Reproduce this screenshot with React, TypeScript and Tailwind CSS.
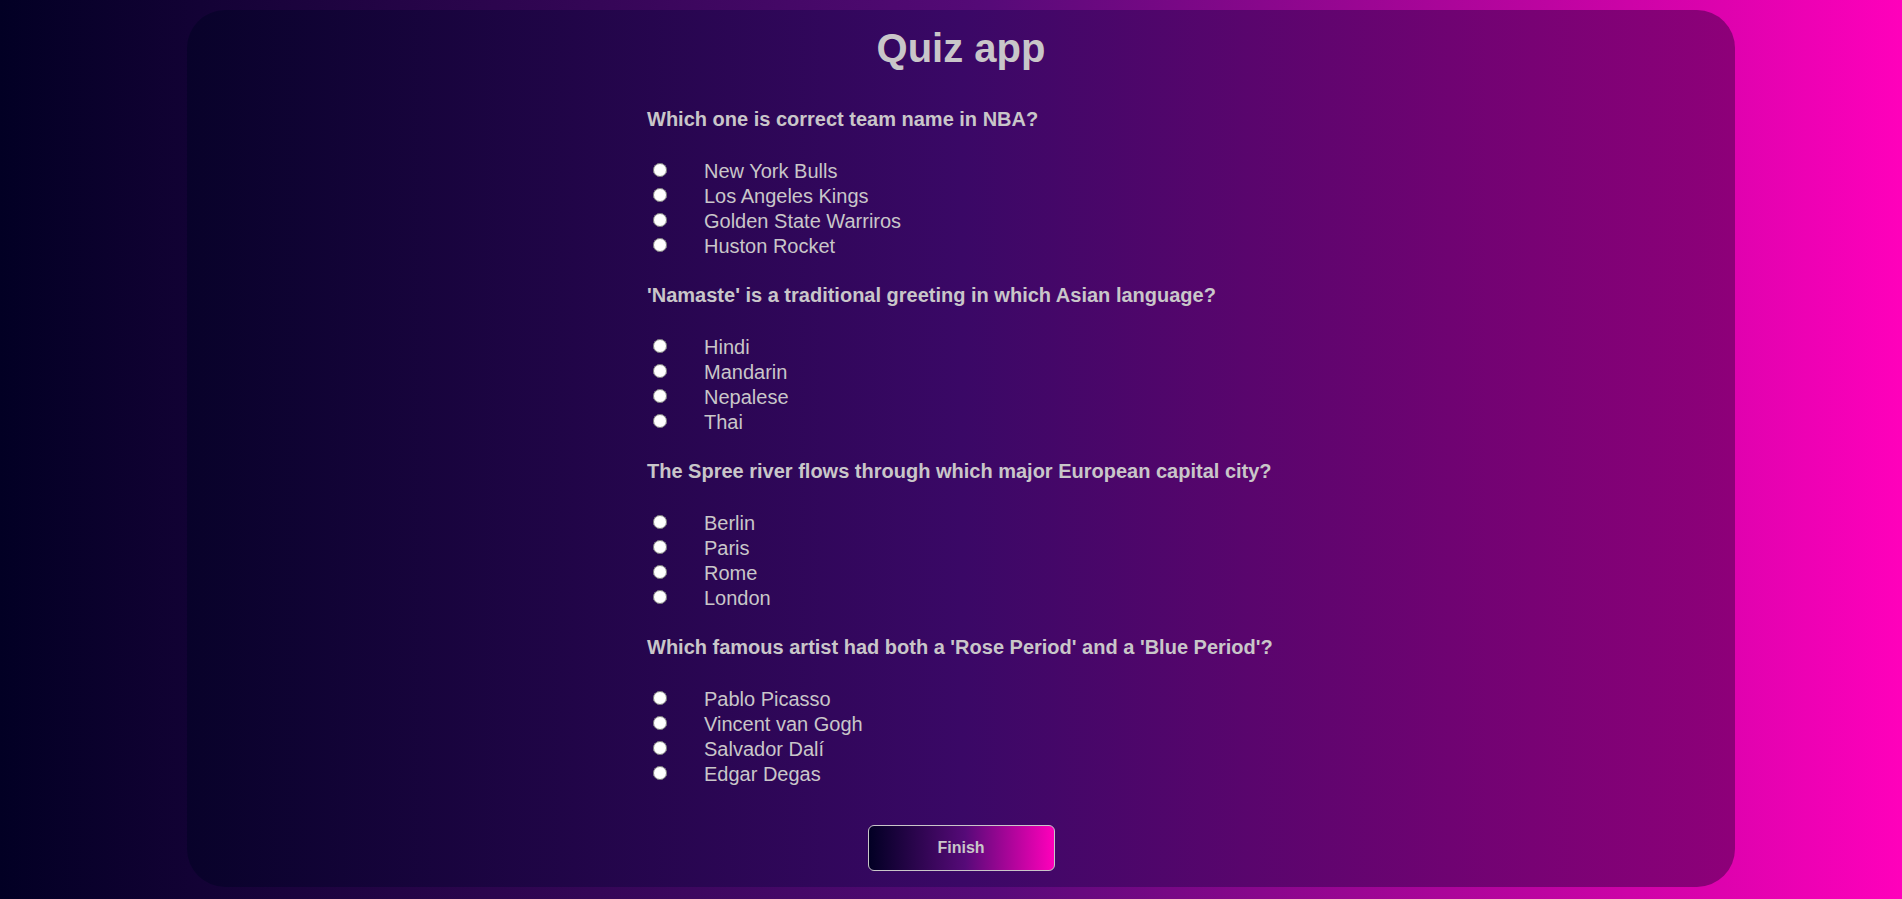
import React, { useState } from 'react';

interface Question {
  id: number;
  text: string;
  options: string[];
}

const questions: Question[] = [
  {
    id: 1,
    text: 'Which one is correct team name in NBA?',
    options: ['New York Bulls', 'Los Angeles Kings', 'Golden State Warriros', 'Huston Rocket'],
  },
  {
    id: 2,
    text: "'Namaste' is a traditional greeting in which Asian language?",
    options: ['Hindi', 'Mandarin', 'Nepalese', 'Thai'],
  },
  {
    id: 3,
    text: 'The Spree river flows through which major European capital city?',
    options: ['Berlin', 'Paris', 'Rome', 'London'],
  },
  {
    id: 4,
    text: "Which famous artist had both a 'Rose Period' and a 'Blue Period'?",
    options: ['Pablo Picasso', 'Vincent van Gogh', 'Salvador Dalí', 'Edgar Degas'],
  },
];

const App: React.FC = () => {
  const [answers, setAnswers] = useState<Record<number, string>>({});

  return (
    <div
      className="min-h-screen bg-[linear-gradient(to_right,#020024,#560a78_52%,#ff00bb)] pl-[187px] pr-[167px] pt-[10px] pb-[12px] text-[#c9c6c9]"
      style={{ fontFamily: '"Liberation Sans", Arial, sans-serif' }}
    >
      <div className="h-[877px] rounded-[38px] bg-[linear-gradient(to_right,#08022a,#3a0866_50%,#8e0079)] pt-[15px] pb-[16px] flex flex-col">
        <h1 className="text-center text-[40px] leading-[46px] font-bold">Quiz app</h1>

        <div className="w-[628px] mx-auto mt-[37px]">
          {questions.map((q) => (
            <div key={q.id} className="mb-[25px]">
              <p className="text-[20px] leading-[23px] font-bold">{q.text}</p>
              <div className="mt-[28px]">
                {q.options.map((opt) => (
                  <label key={opt} className="flex items-start h-[25px] text-[20px] leading-[25px]">
                    <input
                      type="radio"
                      name={`q${q.id}`}
                      checked={answers[q.id] === opt}
                      onChange={() => setAnswers({ ...answers, [q.id]: opt })}
                      className="m-0 ml-[6px] mt-[4px] w-[14px] h-[14px]"
                    />
                    <span className="ml-[37px]">{opt}</span>
                  </label>
                ))}
              </div>
            </div>
          ))}
        </div>

        <div className="flex justify-center mt-[13px]">
          <button className="w-[187px] h-[46px] rounded-[6px] border border-[#c9c6c9] bg-[linear-gradient(to_right,#020024,#560a78_52%,#ff00bb)] text-[16px] font-bold text-[#c9c6c9]">
            Finish
          </button>
        </div>
      </div>
    </div>
  );
};

export default App;
